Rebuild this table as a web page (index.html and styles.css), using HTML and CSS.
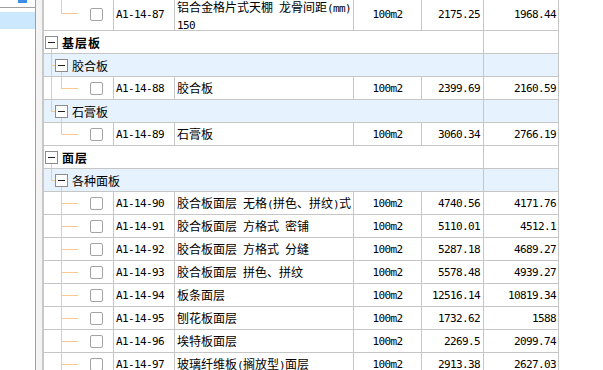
FILE: index.html
```html
<!DOCTYPE html>
<html lang="zh">
<head>
<meta charset="utf-8">
<title>定额列表</title>
<link rel="stylesheet" href="styles.css">
</head>
<body>
<div class="app">
  <aside class="side">
    <div class="side-top"><span class="side-btn"></span></div>
    <div class="side-sel"></div>
  </aside>
  <div class="split"></div>
  <main class="grid">
    <div class="rows">
      <div class="row tall">
        <div class="c tree t-elbow"><span class="cb"></span></div>
        <div class="c code">A1-14-87</div>
        <div class="c name">铝合金格片式天棚 龙骨间距<span class="a">(mm)</span><br><span class="a">150</span></div>
        <div class="c unit">100m2</div>
        <div class="c num">2175.25</div>
        <div class="c num last">1968.44</div>
      </div>

      <div class="row grp">
        <div class="c tree t-g1"><span class="tg tg1"></span><span class="lbl1">基层板</span></div>
        <div class="c"></div>
      </div>

      <div class="row grp sub">
        <div class="c tree t-g2-tee"><span class="tg tg2"></span><span class="lbl2">胶合板</span></div>
        <div class="c"></div>
      </div>

      <div class="row">
        <div class="c tree t-pass-elbow"><span class="cb"></span></div>
        <div class="c code">A1-14-88</div>
        <div class="c name">胶合板</div>
        <div class="c unit">100m2</div>
        <div class="c num">2399.69</div>
        <div class="c num last">2160.59</div>
      </div>

      <div class="row grp sub">
        <div class="c tree t-g2-elbow"><span class="tg tg2"></span><span class="lbl2">石膏板</span></div>
        <div class="c"></div>
      </div>

      <div class="row">
        <div class="c tree t-elbow"><span class="cb"></span></div>
        <div class="c code">A1-14-89</div>
        <div class="c name">石膏板</div>
        <div class="c unit">100m2</div>
        <div class="c num">3060.34</div>
        <div class="c num last">2766.19</div>
      </div>

      <div class="row grp">
        <div class="c tree t-g1"><span class="tg tg1"></span><span class="lbl1">面层</span></div>
        <div class="c"></div>
      </div>

      <div class="row grp sub">
        <div class="c tree t-g2-elbow"><span class="tg tg2"></span><span class="lbl2">各种面板</span></div>
        <div class="c"></div>
      </div>

      <div class="row">
        <div class="c tree t-tee"><span class="cb"></span></div>
        <div class="c code">A1-14-90</div>
        <div class="c name">胶合板面层 无格<span class="a">(</span>拼色、拼纹<span class="a">)</span>式</div>
        <div class="c unit">100m2</div>
        <div class="c num">4740.56</div>
        <div class="c num last">4171.76</div>
      </div>

      <div class="row">
        <div class="c tree t-tee"><span class="cb"></span></div>
        <div class="c code">A1-14-91</div>
        <div class="c name">胶合板面层 方格式 密铺</div>
        <div class="c unit">100m2</div>
        <div class="c num">5110.01</div>
        <div class="c num last">4512.1</div>
      </div>

      <div class="row">
        <div class="c tree t-tee"><span class="cb"></span></div>
        <div class="c code">A1-14-92</div>
        <div class="c name">胶合板面层 方格式 分缝</div>
        <div class="c unit">100m2</div>
        <div class="c num">5287.18</div>
        <div class="c num last">4689.27</div>
      </div>

      <div class="row">
        <div class="c tree t-tee"><span class="cb"></span></div>
        <div class="c code">A1-14-93</div>
        <div class="c name">胶合板面层 拼色、拼纹</div>
        <div class="c unit">100m2</div>
        <div class="c num">5578.48</div>
        <div class="c num last">4939.27</div>
      </div>

      <div class="row">
        <div class="c tree t-tee"><span class="cb"></span></div>
        <div class="c code">A1-14-94</div>
        <div class="c name">板条面层</div>
        <div class="c unit">100m2</div>
        <div class="c num">12516.14</div>
        <div class="c num last">10819.34</div>
      </div>

      <div class="row">
        <div class="c tree t-tee"><span class="cb"></span></div>
        <div class="c code">A1-14-95</div>
        <div class="c name">刨花板面层</div>
        <div class="c unit">100m2</div>
        <div class="c num">1732.62</div>
        <div class="c num last">1588</div>
      </div>

      <div class="row">
        <div class="c tree t-tee"><span class="cb"></span></div>
        <div class="c code">A1-14-96</div>
        <div class="c name">埃特板面层</div>
        <div class="c unit">100m2</div>
        <div class="c num">2269.5</div>
        <div class="c num last">2099.74</div>
      </div>

      <div class="row">
        <div class="c tree t-tee"><span class="cb"></span></div>
        <div class="c code">A1-14-97</div>
        <div class="c name">玻璃纤维板<span class="a">(</span>搁放型<span class="a">)</span>面层</div>
        <div class="c unit">100m2</div>
        <div class="c num">2913.38</div>
        <div class="c num last">2627.03</div>
      </div>
    </div>
  </main>
</div>
</body>
</html>
```

FILE: styles.css
```css
* { box-sizing: border-box; }
html, body { margin: 0; padding: 0; }
body {
  background: #fff;
  color: #000;
  font-family: "Noto Sans CJK SC", sans-serif;
  font-size: 12px;
  overflow: hidden;
  --L: linear-gradient(#f9c98b, #f9c98b);
  --grid: #c6c6c6;
}
.app { display: flex; height: 370px; overflow: hidden; }

.side { flex: none; width: 36px; border-right: 1px solid #a0a0a0; background: #fff; }
.side-top { height: 8px; border-bottom: 1px solid #a0a0a0; padding-left: 18px; }
.side-btn { display: block; width: 9px; height: 3px; background: #3d8ee8; }
.side-sel { margin-top: 4px; height: 17px; background: #cce8ff; }

.split { flex: none; width: 8px; background: #f4f4f4; border-right: 2px solid #c8c8c8; }

.grid { flex: 1; overflow: hidden; background: #fff; }
.rows { margin-top: -2px; width: 515px; }

.row {
  display: grid;
  grid-template-columns: 70px 61px 179px 68px 62px 75px;
  height: 23px;
  border-bottom: 1px solid var(--grid);
  --mid: 11px;
}
.row.tall { height: 33px; --mid: 15px; }
.row.sub { background: #e6f2fd; }

.c {
  border-right: 1px solid var(--grid);
  display: flex;
  align-items: center;
  min-width: 0;
  white-space: nowrap;
  overflow: hidden;
}
.grp .c:first-child { grid-column: span 5; }

.code, .unit, .num, .a {
  font-family: "DejaVu Sans Mono", monospace;
  font-size: 11px;
  letter-spacing: -0.62px;
}
.code { padding-left: 2px; }
.name {
  display: block;
  padding-left: 2px;
  word-spacing: 3.3px;
  line-height: 22px;
}
.tall .name { line-height: 15px; padding-top: 1px; }
.unit { justify-content: center; }
.num { justify-content: flex-end; padding-right: 3px; }
.num.last { padding-right: 2px; }

/* tree connectors */
.t-elbow {
  background:
    var(--L) 17px 0 / 1px calc(var(--mid) + 1px) no-repeat,
    var(--L) 17px var(--mid) / 17px 1px no-repeat;
}
.t-tee {
  background:
    var(--L) 17px 0 / 1px 100% no-repeat,
    var(--L) 17px var(--mid) / 17px 1px no-repeat;
}
.t-pass-elbow {
  background:
    var(--L) 7px 0 / 1px 100% no-repeat,
    var(--L) 17px 0 / 1px calc(var(--mid) + 1px) no-repeat,
    var(--L) 17px var(--mid) / 17px 1px no-repeat;
}
.t-g1 { background: var(--L) 7px var(--mid) / 1px 100% no-repeat; }
.t-g2-tee {
  background:
    var(--L) 7px 0 / 1px 100% no-repeat,
    var(--L) 7px var(--mid) / 5px 1px no-repeat,
    var(--L) 17px var(--mid) / 1px 100% no-repeat;
}
.t-g2-elbow {
  background:
    var(--L) 7px 0 / 1px calc(var(--mid) + 1px) no-repeat,
    var(--L) 7px var(--mid) / 5px 1px no-repeat,
    var(--L) 17px var(--mid) / 1px 100% no-repeat;
}

.cb {
  flex: none;
  width: 13px;
  height: 13px;
  margin-left: 46px;
  border: 1px solid #a3a3a3;
  border-radius: 2px;
  background: #fff;
}

.tg {
  flex: none;
  width: 13px;
  height: 13px;
  border: 1px solid #8c8c8c;
  background: #fff linear-gradient(#202020, #202020) 2px 5px / 7px 1px no-repeat;
}
.tg1 { margin-left: 1px; }
.tg2 { margin-left: 11px; }

.lbl1 { margin-left: 4px; font-weight: 700; letter-spacing: 1px; }
.lbl2 { margin-left: 4px; }
```
